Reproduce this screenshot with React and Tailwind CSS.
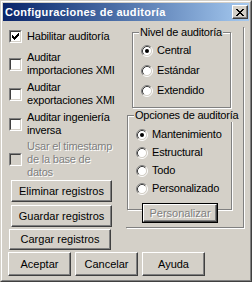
import React from 'react';

// Win2k dialog look: face #d4d0c8, 3d edges white / #808080 / #404040
function Button({ children, className = '', disabled = false, isDefault = false }) {
    const inner = (
        <div className="flex h-full w-full items-center justify-center border border-t-white border-l-white border-r-[#404040] border-b-[#404040] bg-[#d4d0c8] shadow-[inset_-1px_-1px_0_#808080]">
            <span className={`whitespace-nowrap ${disabled ? 'text-[#808080] [text-shadow:1px_1px_0_#fff]' : ''}`}>{children}</span>
        </div>
    );
    if (isDefault) {
        return <div className={`relative border border-black ${className}`}>{inner}</div>;
    }
    return <div className={className}>{inner}</div>;
}

function CheckBox({ checked = false, disabled = false }) {
    const cols = [2, 3, 4, 3, 2, 1, 0];
    return (
        <div className="h-[13px] w-[13px] shrink-0 border border-t-[#808080] border-l-[#808080] border-r-white border-b-white">
            <div className={`flex h-full w-full items-center justify-center border border-t-[#404040] border-l-[#404040] border-r-[#d4d0c8] border-b-[#d4d0c8] ${disabled ? 'bg-[#d4d0c8]' : 'bg-white'}`}>
                {checked && (
                    <svg width="7" height="7" viewBox="0 0 7 7" shapeRendering="crispEdges">
                        {cols.map((y, x) => (
                            <rect key={x} x={x} y={y} width="1" height="3" fill="#000" />
                        ))}
                    </svg>
                )}
            </div>
        </div>
    );
}

function Radio({ checked = false }) {
    return (
        <svg width="12" height="12" viewBox="0 0 12 12" className="shrink-0">
            <circle cx="6" cy="6" r="4.5" fill="#fff" />
            <path d="M2.11 9.89A5.5 5.5 0 0 1 9.89 2.11" fill="none" stroke="#808080" strokeWidth="1" />
            <path d="M9.89 2.11A5.5 5.5 0 0 1 2.11 9.89" fill="none" stroke="#fff" strokeWidth="1" />
            <path d="M2.82 9.18A4.5 4.5 0 0 1 9.18 2.82" fill="none" stroke="#404040" strokeWidth="1" />
            <path d="M9.18 2.82A4.5 4.5 0 0 1 2.82 9.18" fill="none" stroke="#d4d0c8" strokeWidth="1" />
            {checked && <circle cx="6" cy="6" r="2" fill="#000" />}
        </svg>
    );
}

function CheckRow({ lines, checked, disabled, className = '' }) {
    return (
        <div className={`flex items-center gap-[5px] ${className}`}>
            <CheckBox checked={checked} disabled={disabled} />
            <div className={`flex flex-col whitespace-nowrap tracking-[-0.2px] ${disabled ? 'text-[#808080] [text-shadow:1px_1px_0_#fff]' : ''}`}>
                {lines.map((l) => (
                    <span key={l}>{l}</span>
                ))}
            </div>
        </div>
    );
}

function RadioRow({ label, checked }) {
    return (
        <div className="flex h-[13px] items-center gap-[4px]">
            <Radio checked={checked} />
            <span className="whitespace-nowrap tracking-[-0.2px]">{label}</span>
        </div>
    );
}

function GroupBox({ title, className = '', children }) {
    return (
        <div className={`relative border border-[#808080] shadow-[inset_1px_1px_0_#fff,1px_1px_0_#fff] ${className}`}>
            <span className="absolute left-[6px] top-[-7px] whitespace-nowrap bg-[#d4d0c8] px-[1px] leading-[13px] tracking-[-0.2px]">{title}</span>
            {children}
        </div>
    );
}

export default function App() {
    return (
        <div className="h-[282px] w-[252px] overflow-hidden border border-t-[#d4d0c8] border-l-[#d4d0c8] border-r-[#404040] border-b-[#404040] bg-[#d4d0c8] font-['Liberation_Sans',sans-serif] text-[11px] leading-[13px] text-black">
            <div className="flex h-full w-full flex-col border border-t-white border-l-white border-r-[#808080] border-b-[#808080] p-[1px]">
                {/* Title bar */}
                <div className="flex h-[18px] shrink-0 items-center bg-gradient-to-r from-[#0a246a] to-[#a6caf0] pl-[2px]">
                    <span className="font-bold tracking-[0.3px] text-white">Configuraciones de auditoría</span>
                    <div className="ml-auto mr-[1px] h-[14px] w-[16px]">
                        <Button className="h-full w-full">
                            <svg width="8" height="7" viewBox="0 0 8 7" shapeRendering="crispEdges" className="mt-[1px]">
                                <path d="M0 0h2v1h-2zM6 0h2v1h-2zM1 1h2v1h-2zM5 1h2v1h-2zM2 2h4v1h-4zM3 3h2v1h-2zM2 4h4v1h-4zM1 5h2v1h-2zM5 5h2v1h-2zM0 6h2v1h-2zM6 6h2v1h-2z" fill="#000" />
                            </svg>
                        </Button>
                    </div>
                </div>

                {/* Body */}
                <div className="flex min-h-0 flex-1">
                    {/* Left column */}
                    <div className="flex w-[123px] shrink-0 flex-col pl-[6px]">
                        <CheckRow className="mt-[9px]" lines={['Habilitar auditoría']} checked />
                        <CheckRow className="mt-[8px]" lines={['Auditar', 'importaciones XMI']} />
                        <CheckRow className="mt-[4px]" lines={['Auditar', 'exportaciones XMI']} />
                        <CheckRow className="mt-[4px]" lines={['Auditar ingeniería', 'inversa']} />
                        <CheckRow className="mt-[3px]" lines={['Usar el timestamp', 'de la base de', 'datos']} disabled />
                        <Button className="ml-[2px] mt-[1px] h-[22px] w-[101px]">Eliminar registros</Button>
                        <Button className="ml-[2px] mt-[3px] h-[22px] w-[101px]">Guardar registros</Button>
                        <Button className="mt-[2px] h-[21px] w-[102px]">Cargar registros</Button>
                    </div>

                    {/* Right column: outer etched edge shows only on right and bottom */}
                    <div className="mt-[6px] flex h-[201px] w-[118px] flex-col border-r border-b border-[#808080] shadow-[1px_1px_0_#fff]">
                        <GroupBox title="Nivel de auditoría" className="ml-[6px] mt-[5px] h-[76px] w-[99px] pl-[8px] pt-[11px]">
                            <div className="flex flex-col gap-[7px]">
                                <RadioRow label="Central" checked />
                                <RadioRow label="Estándar" />
                                <RadioRow label="Extendido" />
                            </div>
                        </GroupBox>
                        <GroupBox title="Opciones de auditoría" className="ml-[1px] mt-[7px] h-[95px] w-[105px] pl-[8px] pt-[12px]">
                            <div className="flex flex-col gap-[5px]">
                                <RadioRow label="Mantenimiento" checked />
                                <RadioRow label="Estructural" />
                                <RadioRow label="Todo" />
                                <RadioRow label="Personalizado" />
                            </div>
                            <Button isDefault disabled className="ml-[6px] mt-[8px] h-[20px] w-[76px]">Personalizar</Button>
                        </GroupBox>
                    </div>
                </div>

                {/* Bottom buttons */}
                <div className="mb-[3px] flex shrink-0 gap-[4px] pl-[5px]">
                    <Button className="h-[24px] w-[63px]">Aceptar</Button>
                    <Button className="h-[24px] w-[63px]">Cancelar</Button>
                    <Button className="h-[24px] w-[63px]">Ayuda</Button>
                </div>
            </div>
        </div>
    );
}
